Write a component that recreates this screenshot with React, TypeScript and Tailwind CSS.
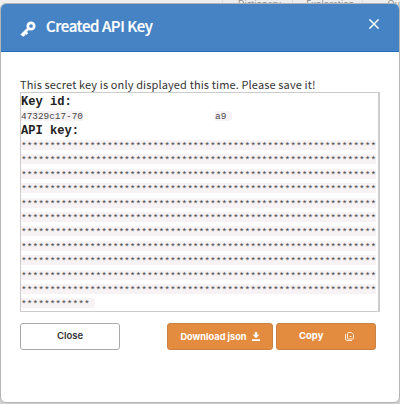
import React from "react";

const SECRET_ROWS = 11;
const SECRET_COLUMNS = 62;

function KeyIcon() {
  return (
    <svg className="h-4 w-4 shrink-0" viewBox="0 0 16 16" fill="none">
      <circle cx="11" cy="5" r="3.2" stroke="white" strokeWidth="2.7" />
      <path d="M8.8 7.2 1.4 14.4M5.2 10.8l2 2.4M2.6 12.6l1.9 2.2" stroke="white" strokeWidth="2.7" />
    </svg>
  );
}

function DownloadIcon() {
  return (
    <svg className="h-[9px] w-2" viewBox="0 0 8 9" fill="white">
      <path d="M2.8 0h2.4v2.8h2.2L4 6.3.6 2.8h2.2zM0 7.2h8V9H0z" />
    </svg>
  );
}

function CopyIcon() {
  return (
    <svg className="h-[9px] w-[9px]" viewBox="0 0 9 9" fill="none" stroke="#ffecd8" strokeWidth="1">
      <path d="M3.5.5h3l2 2v4q0 .5-.5.5H3q-.5 0-.5-.5V1.5q0-1 1-1z" />
      <path d="M.5 2v5q0 1.5 1.5 1.5h5M4.5 4.5h2" />
    </svg>
  );
}

function Code({ children, className = "" }: { children: React.ReactNode; className?: string }) {
  return (
    <span className={`block h-[10px] whitespace-nowrap bg-[#f7f2f4] text-[#484848] ${className}`}>{children}</span>
  );
}

export default function App() {
  return (
    <div className="relative h-[404px] w-[400px] overflow-hidden bg-[#cfcfcf] font-['Noto_Sans_CJK_SC',sans-serif]">
      <div className="flex h-2 overflow-hidden bg-[#eeeeee] pl-[222px] font-['Open_Sans',sans-serif] text-[9px] leading-[7px] text-[#888]">
        <span className="w-[73px] border-l border-[#ddd] pl-[15px]">Dictionary</span>
        <span className="w-[73px] border-l border-[#ddd] pl-[13px]">Exploration</span>
        <span className="border-l border-[#ddd] pl-6">Qu</span>
      </div>

      <div className="absolute left-0 top-[3px] flex h-[400px] w-[400px] flex-col overflow-hidden rounded-[6px] border border-[#b5b5b5] bg-white">
        <header className="flex h-12 shrink-0 items-center border-b border-[#1d70c0] bg-[#4583c4] pl-[19px] pr-5 text-white">
          <div className="pt-[2px]"><KeyIcon /></div>
          <h1 className="mb-1 ml-[10px] flex-1 whitespace-nowrap text-[15px] font-medium leading-6 tracking-[-0.42px] [-webkit-text-stroke:0.2px_white]">Created API Key</h1>
          <svg className="mb-[7px] h-[10px] w-[10px]" viewBox="0 0 10 10" stroke="white" strokeWidth="1.5">
            <path d="M.4.4l9.2 9.2M9.6.4.4 9.6" />
          </svg>
        </header>

        <main className="pl-[19px] pt-[25px]">
          <p className="h-[15px] whitespace-nowrap text-[11px] leading-[15px] tracking-[0.13px] text-[#333]">
            This secret key is only displayed this time. Please save it!
          </p>
          <section className="h-[220px] w-[360px] border border-r-2 border-[#cccccc] font-['Liberation_Mono',monospace]">
            <h2 className="h-[18px] text-[12.1px] font-bold leading-[18px] text-[#222]">Key id:</h2>
            <div className="flex h-3">
              <Code className="w-[62px] text-[9.4px] leading-[12px]">47329c17-70</Code>
              <Code className="ml-[132px] w-[17px] rounded-r-sm text-[9.4px] leading-[12px]">a9</Code>
            </div>
            <h2 className="h-[17px] text-[12.1px] font-bold leading-[17px] text-[#222]">API key:</h2>
            <div className="flex flex-col gap-[4.4px]">
              {Array.from({ length: SECRET_ROWS }, (_, i) => (
                <Code key={i} className="w-[355px] text-[9.55px] leading-[13px]">{"*".repeat(SECRET_COLUMNS)}</Code>
              ))}
              <Code className="w-[74px] rounded-r-sm text-[9.55px] leading-[13px]">************</Code>
            </div>
          </section>

          <footer className="mt-[11px] flex font-['Inter',sans-serif] text-[9.5px] font-bold">
            <button className="h-[27px] w-[100px] rounded-[3px] border border-[#aaaaaa] font-semibold text-[#333]">Close</button>
            <button className="ml-[47px] flex h-[27px] w-[106px] items-center justify-center gap-[5px] whitespace-nowrap rounded-[3px] border border-[#c98243] bg-[#e38b3f] text-[9.2px] text-white">
              Download json <DownloadIcon />
            </button>
            <button className="ml-[3px] flex h-[27px] w-[100px] items-center rounded-[3px] border border-[#c98243] bg-[#e38b3f] pl-[22px] text-white">
              <span className="w-[46px] text-left">Copy</span><CopyIcon />
            </button>
          </footer>
        </main>
      </div>
    </div>
  );
}
